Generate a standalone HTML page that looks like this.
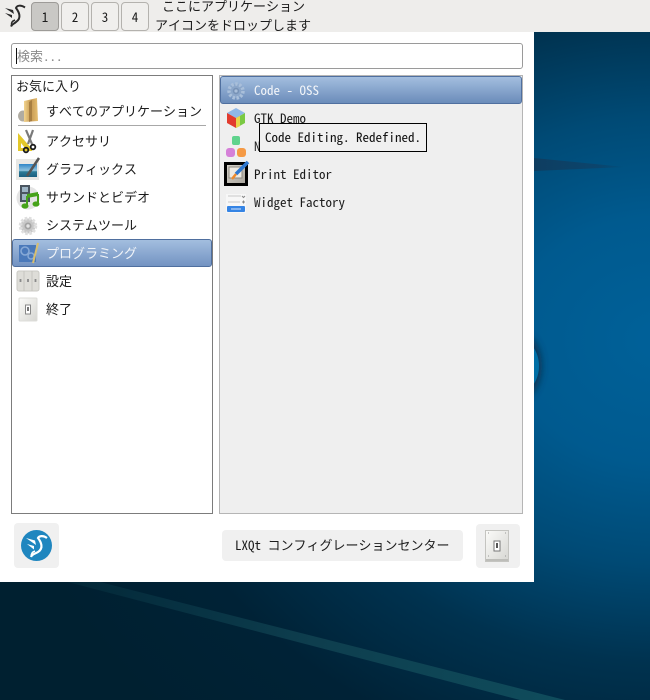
<!DOCTYPE html>
<html lang="ja"><head><meta charset="utf-8"><title>LXQt</title>
<style>
html,body{margin:0;padding:0}
body{width:650px;height:700px;overflow:hidden;position:relative;background:#002233;font-family:"Noto Sans Mono CJK JP","Liberation Mono","Noto Sans CJK JP",monospace;font-size:13px;color:#1c1c1c}
.a{position:absolute;box-sizing:border-box}
.t{position:absolute;white-space:nowrap;line-height:18px;height:18px}
.l{font-family:"WenQuanYi Zen Hei Mono","Noto Sans Mono CJK JP","Liberation Mono",monospace}
.num{position:absolute;top:2px;width:28px;height:29px;box-sizing:border-box;border:1px solid #b4b2ae;border-radius:4px;background:#f0efed;text-align:center;line-height:27px;font-size:13px}
svg{position:absolute;overflow:visible}
svg.i{filter:blur(.35px)}
</style></head><body>
<svg style="left:0;top:0" width="650" height="700" viewBox="0 0 650 700">
<defs>
<radialGradient id="w" gradientUnits="userSpaceOnUse" cx="660" cy="340" r="680" gradientTransform="translate(660 340) scale(1 .82) translate(-660 -340)">
<stop offset="0" stop-color="#006199"/><stop offset=".22" stop-color="#005a8f"/><stop offset=".4" stop-color="#004a75"/><stop offset=".58" stop-color="#00324f"/><stop offset=".78" stop-color="#002236"/><stop offset="1" stop-color="#002030"/></radialGradient>
<linearGradient id="b" x1="0" y1="0" x2="1" y2="0"><stop offset="0" stop-color="#0e3d60"/><stop offset=".7" stop-color="#0e4268" stop-opacity=".8"/><stop offset="1" stop-color="#0c3f63" stop-opacity="0"/></linearGradient>
<linearGradient id="s" gradientUnits="userSpaceOnUse" x1="70" y1="580" x2="560" y2="700"><stop offset="0" stop-color="#0a3a48" stop-opacity=".3"/><stop offset=".5" stop-color="#0e3e4e"/><stop offset="1" stop-color="#0f4c5c"/></linearGradient>
<linearGradient id="fo" x1="0" y1="0" x2="1" y2="0"><stop offset="0" stop-color="#f2d48f"/><stop offset=".5" stop-color="#c79a52"/><stop offset="1" stop-color="#e6bf72"/></linearGradient>
<linearGradient id="sw" x1="0" y1="0" x2="1" y2="1"><stop offset="0" stop-color="#fbfbf9"/><stop offset="1" stop-color="#d6d6d2"/></linearGradient>
<linearGradient id="pic" x1="0" y1="0" x2="0" y2="1"><stop offset="0" stop-color="#2f86c8"/><stop offset=".5" stop-color="#8fc3de"/><stop offset=".6" stop-color="#2b7a96"/><stop offset="1" stop-color="#1b5f80"/></linearGradient>
<linearGradient id="pe" x1="0" y1="0" x2="1" y2="1"><stop offset="0" stop-color="#d8d4cc"/><stop offset="1" stop-color="#a8a49c"/></linearGradient>
<filter id="bl" x="-50%" y="-50%" width="200%" height="200%"><feGaussianBlur stdDeviation="3.5"/></filter>
</defs>
<rect width="650" height="700" fill="url(#w)"/>
<path d="M534 158 L625 167 L534 171Z" fill="url(#b)"/>
<ellipse cx="520" cy="366" rx="22" ry="34" fill="#0a3454" filter="url(#bl)" opacity=".9"/>
<ellipse cx="517" cy="366" rx="22" ry="28" fill="#006fa6"/>
<path d="M60 580 L100 582 L565 700 L520 700Z" fill="url(#s)"/>
</svg>

<div class="a" style="left:0;top:0;width:650px;height:32px;background:#eeedeb"></div>
<svg class="i" style="left:0;top:0" width="30" height="30" viewBox="0 0 30 30" fill="none" stroke="#2a2a2a" stroke-width="2"><path d="M25 7.5 C21 5 17 5 16 8 C19 12 22 18 16 22 C14 24 12 24 11 26.5"/><path d="M11.5 25 C11 22.5 12.500 21 15 20" stroke-width="1.500"/><path d="M5 8 L13 10 L14 14Z M5 13 L12 15 L12 18Z" fill="#2a2a2a" stroke="none"/></svg>
<div class="num l" style="left:31px;background:#c9c8c5;border-color:#9d9b98">1</div>
<div class="num l" style="left:61px">2</div>
<div class="num l" style="left:91px">3</div>
<div class="num l" style="left:121px">4</div>
<div class="t" style="left:162px;top:-3px">ここにアプリケーション</div>
<div class="t" style="left:155px;top:16px">アイコンをドロップします</div>

<div class="a" style="left:0;top:32px;width:534px;height:550px;background:#fff"></div>

<div class="a" style="left:11px;top:43px;width:512px;height:26px;background:#fff;border:1px solid #9a9a9a;border-radius:3px"></div>
<div class="a" style="left:16px;top:48px;width:1px;height:16px;background:#111"></div>
<div class="t" style="left:17px;top:47px;color:#8a8a8a">検索<span class="l">...</span></div>

<div class="a" style="left:11px;top:75px;width:202px;height:439px;background:#fff;border:1px solid #7c7c7c"></div>
<div class="a" style="left:219px;top:75px;width:304px;height:439px;background:#efefef;border:1px solid #b5b5b5"></div>

<div class="t" style="left:16px;top:77px">お気に入り</div>
<div class="t" style="left:46px;top:102px">すべてのアプリケーション</div>
<div class="a" style="left:18px;top:125px;width:188px;height:1px;background:#a8a8a8"></div>
<div class="t" style="left:46px;top:132px">アクセサリ</div>
<div class="t" style="left:46px;top:160px">グラフィックス</div>
<div class="t" style="left:46px;top:188px">サウンドとビデオ</div>
<div class="t" style="left:46px;top:216px">システムツール</div>
<div class="a" style="left:12px;top:239px;width:200px;height:28px;border:1px solid #4f6f9f;border-radius:3px;background:linear-gradient(#a3bedf,#7393c2)"></div>
<div class="t" style="left:46px;top:244px;color:#f1f4f8">プログラミング</div>
<div class="t" style="left:46px;top:272px">設定</div>
<div class="t" style="left:46px;top:300px">終了</div>

<!-- folder -->
<svg class="i" style="left:17px;top:98px" width="24" height="26" viewBox="0 0 24 26"><ellipse cx="6" cy="18" rx="5" ry="5.500" fill="#b0aca2"/><path d="M7 3 L20 0 L21 23 L7 24Z" fill="url(#fo)"/><path d="M12 4 L15 2 L15 23 L12 24Z" fill="#a87f42"/></svg>
<!-- accessories -->
<svg class="i" style="left:17px;top:130px" width="24" height="24" viewBox="0 0 24 24"><path d="M1 3 L15 19 L15 21 L1 21Z" fill="#e3c82a"/><path d="M4 13 L8 18 L4 18Z" fill="#fff"/><path d="M9 0 L15 14 M16 0 L11 14" stroke="#7a7a7a" stroke-width="2.200"/><circle cx="9" cy="20" r="2.300" fill="none" stroke="#1a1a1a" stroke-width="1.800"/><circle cx="16" cy="17" r="2.300" fill="none" stroke="#1a1a1a" stroke-width="1.800"/></svg>
<!-- graphics -->
<svg class="i" style="left:16px;top:158px" width="24" height="23" viewBox="0 0 24 23"><rect x="0" y="1" width="23" height="21" fill="#e8e8e5"/><rect x="3" y="6" width="18" height="13" fill="url(#pic)"/><path d="M23 0 L11 18" stroke="#555" stroke-width="2.500"/></svg>
<!-- multimedia -->
<svg class="i" style="left:17px;top:185px" width="24" height="25" viewBox="0 0 24 25"><circle cx="11" cy="13" r="11.500" fill="#e4e4e4"/><rect x="3" y="0" width="10" height="17" fill="#4a5560"/><rect x="5" y="2" width="6" height="5" fill="#9db4c4"/><rect x="5" y="9" width="6" height="6" fill="#9db4c4"/><path d="M10 9 L21 7 L21 11 L10 13Z" fill="#46a31a"/><path d="M10 11 L10 20 M21 9 L21 18" stroke="#46a31a" stroke-width="2"/><ellipse cx="8" cy="21" rx="3.500" ry="2.600" fill="#46a31a"/><ellipse cx="19" cy="19" rx="3.500" ry="2.600" fill="#46a31a"/></svg>
<!-- system tools -->
<svg class="i" style="left:18px;top:216px" width="20" height="20" viewBox="0 0 20 20"><circle cx="10" cy="10" r="7.500" fill="#c7c7c7" stroke="#dedede" stroke-width="3.500" stroke-dasharray="2.400 1.600"/><circle cx="10" cy="10" r="3.500" fill="#a3a3a3"/><circle cx="10" cy="10" r="1.700" fill="#e4e4e4"/></svg>
<!-- programming -->
<svg class="i" style="left:18px;top:243px" width="22" height="21" viewBox="0 0 22 21"><rect x="1" y="2" width="17" height="17" fill="#4a79ba"/><circle cx="7" cy="8" r="4" fill="none" stroke="#87a9d6" stroke-width="1.600"/><circle cx="13" cy="13" r="3" fill="none" stroke="#87a9d6" stroke-width="1.400"/><path d="M20 0 L15 20" stroke="#d9bf6e" stroke-width="2"/></svg>
<!-- settings -->
<svg class="i" style="left:16px;top:270px" width="24" height="22" viewBox="0 0 24 22"><rect x="1" y="1" width="22" height="20" rx="2" fill="#dedDd8" stroke="#cbcac5"/><path d="M8 1V21M16 1V21" stroke="#c6c5c0"/><path d="M4.500 9v3M12 9v3M19.500 9v3" stroke="#8a8a8a" stroke-width="1.800"/></svg>
<!-- leave -->
<svg class="i" style="left:18px;top:297px" width="20" height="25" viewBox="0 0 20 25"><rect x="1" y="1" width="18" height="23" rx="1" fill="url(#sw)" stroke="#dcdcd8"/><rect x="7.500" y="8" width="5" height="9" fill="#fff" stroke="#888"/><rect x="9" y="10" width="2" height="4" fill="#777"/></svg>

<div class="a" style="left:220px;top:76px;width:302px;height:28px;border:1px solid #4f6f9f;border-radius:3px;background:linear-gradient(#a3bedf,#6b8cba)"></div>
<svg class="i" style="left:226px;top:81px" width="20" height="20" viewBox="0 0 20 20"><circle cx="10" cy="10" r="7" fill="#8ba6c9" stroke="#a9bfda" stroke-width="3.500" stroke-dasharray="2.400 1.600"/><circle cx="10" cy="10" r="3.200" fill="#7792b6"/><circle cx="10" cy="10" r="1.600" fill="#a9bfda"/></svg>
<div class="t l" style="left:254px;top:81px;color:#f1f4f8">Code - OSS</div>

<svg class="i" style="left:226px;top:107px" width="20" height="22" viewBox="0 0 20 22"><path d="M10 1 L19 6 L10 11 L1 6Z" fill="#8fb8e8"/><path d="M1 6 L10 11 L10 21 L1 16Z" fill="#e23b2e"/><path d="M19 6 L10 11 L10 21 L19 16Z" fill="#7ac943"/><path d="M10 11 L10 21 L14 19 L14 9Z" fill="#e8d54a"/></svg>
<div class="t l" style="left:254px;top:109px">GTK Demo</div>

<svg class="i" style="left:226px;top:136px" width="20" height="21" viewBox="0 0 20 21"><rect x="6" y="0" width="8" height="9" rx="2" fill="#5fd38d"/><rect x="0" y="12" width="9" height="9" rx="3" fill="#d580d8"/><rect x="11" y="12" width="9" height="9" rx="3" fill="#f59a45"/></svg>
<div class="t l" style="left:254px;top:137px">N</div>

<svg style="left:224px;top:162px" width="24" height="24" viewBox="0 0 24 24"><rect x="1.500" y="1.500" width="21" height="21" fill="url(#pe)" stroke="#000" stroke-width="3"/><rect x="5" y="5" width="13" height="11" fill="#eeeae2" stroke="#8c8880"/><path d="M24 0 L12 12" stroke="#2f78d0" stroke-width="3.500"/><path d="M12 12 L8 17" stroke="#f08a2a" stroke-width="2.500"/></svg>
<div class="t l" style="left:254px;top:165px">Print Editor</div>

<svg class="i" style="left:226px;top:194px" width="20" height="19" viewBox="0 0 20 19"><rect x="0" y="0" width="20" height="19" fill="#f7f7f7"/><path d="M2 2H15M2 8H14" stroke="#c8c8c8"/><path d="M16 8h3M17.500 6.500v3M16 2l1.500 1.500L19 2" stroke="#888" fill="none"/><rect x="1" y="12" width="18" height="6" rx="1" fill="#3584e4"/><rect x="5" y="14.500" width="10" height="1" fill="#d5e5fa"/></svg>
<div class="t l" style="left:254px;top:193px">Widget Factory</div>

<div class="a" style="left:259px;top:123px;width:168px;height:29px;background:#f0f0f0;border:1px solid #000"></div>
<div class="t l" style="left:265px;top:128px;color:#111">Code Editing. Redefined.</div>

<div class="a" style="left:14px;top:523px;width:45px;height:45px;background:#f0f0f0;border-radius:4px"></div>
<svg class="i" style="left:21px;top:530px" width="31" height="31" viewBox="0 0 31 31"><circle cx="15.500" cy="15.500" r="15.500" fill="#1f86bf"/><g fill="none" stroke="#fff" stroke-width="2.200"><path d="M26 8 C22 5 18 6 17 8 C20 12 23 18 17 22 C14 24 11 24 10 27"/><path d="M10.500 26 C10 23.500 11.500 22 14 21" stroke-width="1.600"/></g><path d="M5 8 L14 10.500 L15 15Z M6 14 L13 16 L13 19.500Z" fill="#fff"/></svg>
<div class="a" style="left:222px;top:530px;width:241px;height:31px;background:#f0f0f0;border-radius:4px"></div>
<div class="t" style="left:235px;top:536px"><span class="l">LXQt</span> コンフィグレーションセンター</div>
<div class="a" style="left:476px;top:524px;width:44px;height:44px;background:#f0f0f0;border-radius:4px"></div>
<svg class="i" style="left:485px;top:530px" width="24" height="32" viewBox="0 0 24 32"><rect x=".5" y=".5" width="23" height="31" fill="url(#sw)" stroke="#c4c4c0"/><rect x="9" y="11" width="6" height="10" fill="#fff" stroke="#777"/><rect x="11" y="13" width="2" height="5" fill="#555"/><path d="M3 3h1M20 3h1M3 26h1M20 26h1" stroke="#999"/><path d="M1 30 H23" stroke="#bdbdb9" stroke-width="2"/></svg>
</body></html>
